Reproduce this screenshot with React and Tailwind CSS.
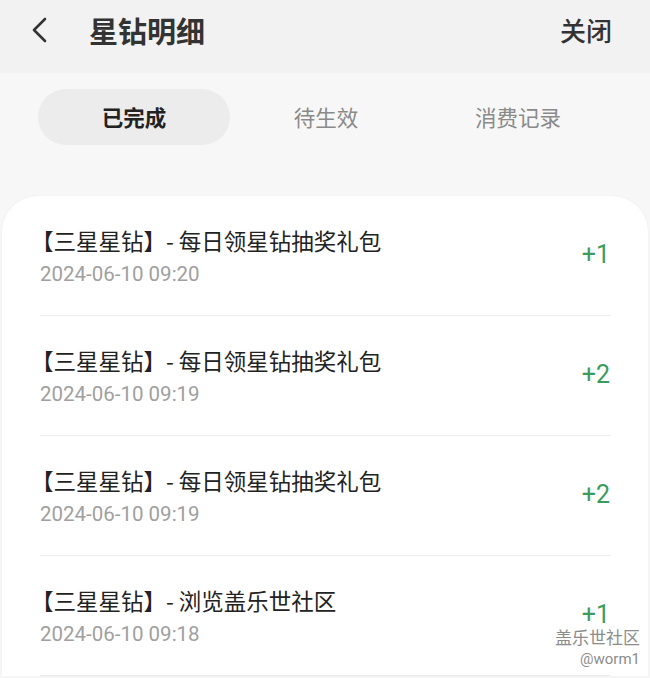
const records = [
  { title: "【三星星钻】- 每日领星钻抽奖礼包", time: "2024-06-10 09:20", amount: "+1" },
  { title: "【三星星钻】- 每日领星钻抽奖礼包", time: "2024-06-10 09:19", amount: "+2" },
  { title: "【三星星钻】- 每日领星钻抽奖礼包", time: "2024-06-10 09:19", amount: "+2" },
  { title: "【三星星钻】- 浏览盖乐世社区", time: "2024-06-10 09:18", amount: "+1" },
];

const tabs = ["已完成", "待生效", "消费记录"];

const App = () => {
  return (
    <div
      className="relative w-[650px] h-[678px] overflow-hidden bg-[#f7f7f7]"
      style={{ fontFamily: '"Noto Sans CJK SC", Roboto, "Noto Sans", sans-serif' }}
    >
      {/* Header */}
      <div className="h-[73px] bg-[#f2f2f2] flex items-start pt-[14px] px-[30px]">
        <svg width="20" height="32" viewBox="0 0 20 32">
          <polyline
            points="15,5 4,16 15,27"
            fill="none"
            stroke="#333"
            strokeWidth="2.6"
            strokeLinecap="round"
            strokeLinejoin="round"
          />
        </svg>
        <h1 className="ml-[39px] text-[29px] font-bold text-[#333] leading-[32px]">星钻明细</h1>
        <button className="ml-auto mr-[8px] text-[26px] font-medium text-[#333] leading-[32px]">
          关闭
        </button>
      </div>

      {/* Tabs */}
      <div className="flex pl-[38px] pt-[16px]">
        {tabs.map((t, i) => (
          <div
            key={t}
            className={
              i === 0
                ? "w-[192px] h-[56px] rounded-full bg-[#ececec] flex items-center justify-center text-[21.5px] font-bold text-[#222]"
                : "w-[192px] h-[56px] flex items-center justify-center text-[21.5px] text-[#8a8a8a]"
            }
          >
            {t}
          </div>
        ))}
      </div>

      {/* List card */}
      <div className="mx-[2px] mt-[51px] bg-white rounded-t-[36px] px-[38px] shadow-[0_0_2px_rgba(0,0,0,0.06)]">
        {records.map((r, i) => (
          <div key={i} className="h-[120px] border-b border-[#ececec] flex items-start">
            <div className="flex-1 pt-[29px]">
              <div className="text-[22.5px] leading-[30px] text-[#222] -ml-[9px]">{r.title}</div>
              <div
                className="text-[20.5px] leading-[38px] text-[#a0a0a0]"
                style={{ fontFamily: "Roboto, sans-serif" }}
              >
                {r.time}
              </div>
            </div>
            <div
              className="self-center -mt-[2px] text-[25px] text-[#3c9c5c]"
              style={{ fontFamily: "Roboto, sans-serif" }}
            >
              {r.amount}
            </div>
          </div>
        ))}
      </div>

      {/* Watermark */}
      <div className="absolute right-[10px] top-[628px] flex flex-col items-end text-[#8c8c8c] leading-none">
        <span className="text-[17px]">盖乐世社区</span>
        <span className="mt-[7px] text-[15px]" style={{ fontFamily: "Roboto, sans-serif" }}>
          @worm1
        </span>
      </div>
    </div>
  );
};

export default App;
